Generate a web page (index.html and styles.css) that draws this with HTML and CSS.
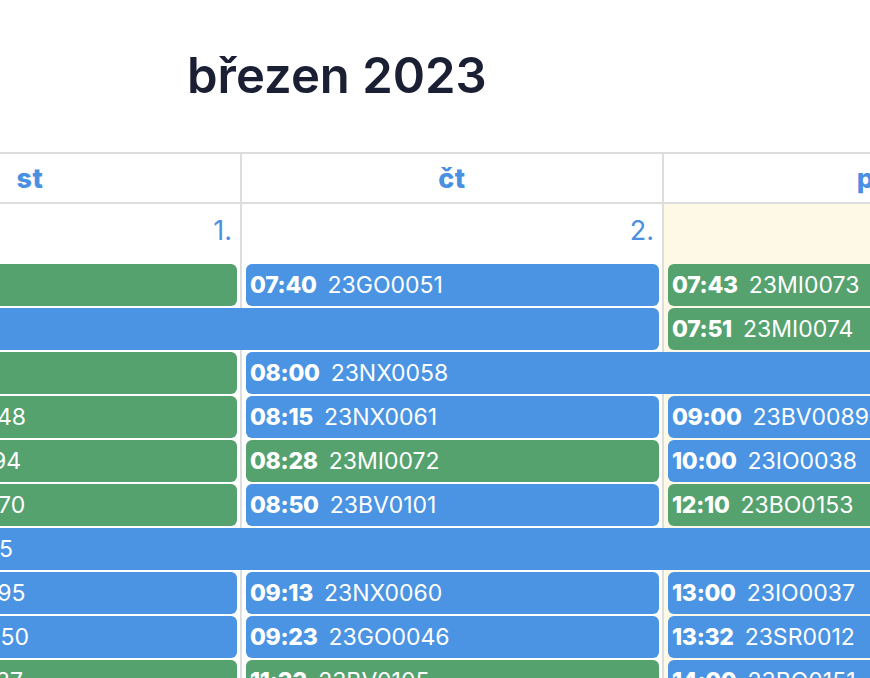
FILE: index.html
```html
<!DOCTYPE html>
<html lang="cs">
<head>
<meta charset="utf-8">
<title>březen 2023</title>
<link rel="stylesheet" href="styles.css">
</head>
<body>
<div class="page">
  <header class="toolbar">
    <h1 class="title">březen 2023</h1>
  </header>
  <div class="cal">
    <div class="head">
      <div class="hcell">út</div>
      <div class="hcell">st</div>
      <div class="hcell">čt</div>
      <div class="hcell">pá</div>
      <div class="hcell">so</div>
    </div>
    <div class="week">
      <div class="day c1 other"><span class="num">28.</span></div>
      <div class="day c2"><span class="num">1.</span></div>
      <div class="day c3"><span class="num">2.</span></div>
      <div class="day c4 today"><span class="num">3.</span></div>
      <div class="day c5"><span class="num">4.</span></div>

      <div class="ev green s2 e3 r0"><b>07:11</b><span>23IO011</span></div>
      <div class="ev blue s3 e4 r0"><b>07:40</b><span>23GO0051</span></div>
      <div class="ev green s4 e5 r0"><b>07:43</b><span>23MI0073</span></div>

      <div class="ev blue s1 e4 r1"><b>07:00</b><span>23NX0047</span></div>
      <div class="ev green s4 e5 r1"><b>07:51</b><span>23MI0074</span></div>

      <div class="ev green s2 e3 r2"><b>07:11</b><span>23IO016</span></div>
      <div class="ev blue s3 e6 r2"><b>08:00</b><span>23NX0058</span></div>

      <div class="ev green s2 e3 r3"><b>08:20</b><span>23NX0048</span></div>
      <div class="ev blue s3 e4 r3"><b>08:15</b><span>23NX0061</span></div>
      <div class="ev blue s4 e5 r3"><b>09:00</b><span>23BV0089</span></div>

      <div class="ev green s2 e3 r4"><b>08:30</b><span>23MI0094</span></div>
      <div class="ev green s3 e4 r4"><b>08:28</b><span>23MI0072</span></div>
      <div class="ev blue s4 e5 r4"><b>10:00</b><span>23IO0038</span></div>

      <div class="ev green s2 e3 r5"><b>08:40</b><span>23BO0070</span></div>
      <div class="ev blue s3 e4 r5"><b>08:50</b><span>23BV0101</span></div>
      <div class="ev green s4 e5 r5"><b>12:10</b><span>23BO0153</span></div>

      <div class="ev blue s2 e6 r6"><b>08:00</b><span>23IO0015</span></div>

      <div class="ev blue s2 e3 r7"><b>08:50</b><span>23NX0095</span></div>
      <div class="ev blue s3 e4 r7"><b>09:13</b><span>23NX0060</span></div>
      <div class="ev blue s4 e5 r7"><b>13:00</b><span>23IO0037</span></div>

      <div class="ev blue s2 e3 r8"><b>09:00</b><span>23GO0050</span></div>
      <div class="ev blue s3 e4 r8"><b>09:23</b><span>23GO0046</span></div>
      <div class="ev blue s4 e5 r8"><b>13:32</b><span>23SR0012</span></div>

      <div class="ev green s2 e3 r9"><b>09:30</b><span>23BV0037</span></div>
      <div class="ev green s3 e4 r9"><b>11:33</b><span>23BV0105</span></div>
      <div class="ev blue s4 e5 r9"><b>14:00</b><span>23BO0151</span></div>
    </div>
  </div>
</div>
</body>
</html>
```
FILE: styles.css
```css
html, body {
  margin: 0;
  padding: 0;
  background: #fff;
}
body {
  width: 870px;
  height: 678px;
  overflow: hidden;
  font-family: Inter, "Noto Sans", sans-serif;
}
.page {
  width: 870px;
}
.toolbar {
  height: 152px;
  display: flex;
  align-items: flex-start;
}
.title {
  margin: 0;
  padding: 46px 0 0 187px;
  font-size: 49px;
  line-height: 60px;
  font-weight: 600;
  color: #1b1f33;
}
.cal {
  margin-left: -602px;
  width: 2110px;
  border-top: 2px solid #dddddd;
}
.head {
  display: grid;
  grid-template-columns: repeat(5, 422px);
  border-bottom: 2px solid #dddddd;
}
.hcell {
  height: 48px;
  border-right: 2px solid #dddddd;
  display: flex;
  align-items: center;
  justify-content: center;
  color: #4a90e2;
  font-weight: 800;
  font-size: 27px;
  letter-spacing: 0.5px;
}
.week {
  display: grid;
  grid-template-columns: repeat(5, 422px);
  grid-template-rows: 60px repeat(10, 44px) 40px;
}
.day {
  grid-row: 1 / -1;
  border-right: 2px solid #dddddd;
  display: flex;
  flex-direction: column;
  align-items: flex-end;
}
.day.today {
  background: #fef8e6;
}
.num {
  padding: 10px 8px 0 0;
  font-size: 27px;
  line-height: 34px;
  font-weight: 400;
  color: #4a90e2;
}
.c1 { grid-column: 1; }
.c2 { grid-column: 2; }
.c3 { grid-column: 3; }
.c4 { grid-column: 4; }
.c5 { grid-column: 5; }
.s1 { grid-column-start: 1; }
.s2 { grid-column-start: 2; }
.s3 { grid-column-start: 3; }
.s4 { grid-column-start: 4; }
.e3 { grid-column-end: 3; }
.e4 { grid-column-end: 4; }
.e5 { grid-column-end: 5; }
.e6 { grid-column-end: 6; }
.r0 { grid-row: 2; }
.r1 { grid-row: 3; }
.r2 { grid-row: 4; }
.r3 { grid-row: 5; }
.r4 { grid-row: 6; }
.r5 { grid-row: 7; }
.r6 { grid-row: 8; }
.r7 { grid-row: 9; }
.r8 { grid-row: 10; }
.r9 { grid-row: 11; }
.ev {
  height: 42px;
  margin: 0 5px 2px 4px;
  border-radius: 6px;
  display: flex;
  align-items: center;
  gap: 11px;
  padding: 0 4px;
  color: #fff;
  font-size: 23px;
  white-space: nowrap;
  overflow: hidden;
  box-sizing: border-box;
}
.ev b {
  font-weight: 800;
  letter-spacing: -0.3px;
}
.ev span {
  font-weight: 400;
}
.blue { background: #4a94e3; }
.green { background: #55a26f; }
```
